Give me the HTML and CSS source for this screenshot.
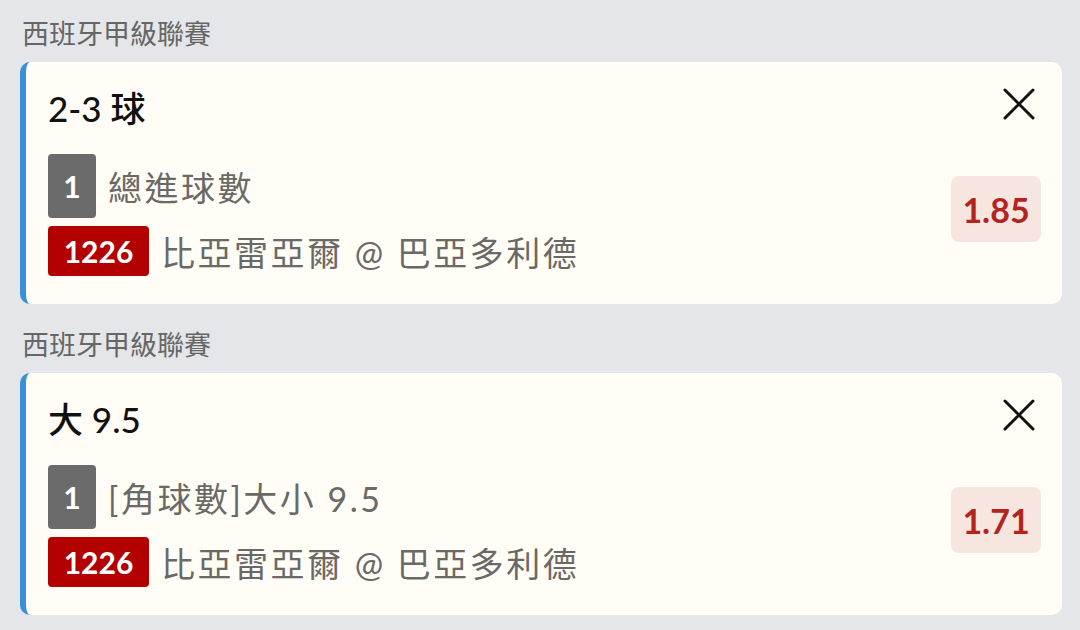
FILE: index.html
```html
<!DOCTYPE html>
<html lang="zh-Hant">
<head>
  <meta charset="UTF-8">
  <meta name="viewport" content="width=device-width, initial-scale=1.0">
  <title>投注單</title>
  <link rel="stylesheet" href="styles.css">
</head>
<body>
  <div class="bet-group">
    <div class="league">西班牙甲級聯賽</div>
    <div class="bet-card">
      <div class="bet-main">
        <div class="selection">2-3 球</div>
        <div class="bet-row">
          <span class="leg-no">1</span>
          <span class="bet-text">總進球數</span>
        </div>
        <div class="bet-row">
          <span class="match-no">1226</span>
          <span class="bet-text">比亞雷亞爾 @ 巴亞多利德</span>
        </div>
      </div>
      <div class="bet-side">
        <button class="close" aria-label="移除">
          <svg viewBox="0 0 32 32" width="32" height="32"><path d="M2 2 L30 30 M30 2 L2 30" stroke="#111" stroke-width="3" stroke-linecap="round" fill="none"/></svg>
        </button>
        <div class="odds">1.85</div>
      </div>
    </div>
  </div>

  <div class="bet-group">
    <div class="league">西班牙甲級聯賽</div>
    <div class="bet-card">
      <div class="bet-main">
        <div class="selection">大 9.5</div>
        <div class="bet-row">
          <span class="leg-no">1</span>
          <span class="bet-text">[角球數]大小 9.5</span>
        </div>
        <div class="bet-row">
          <span class="match-no">1226</span>
          <span class="bet-text">比亞雷亞爾 @ 巴亞多利德</span>
        </div>
      </div>
      <div class="bet-side">
        <button class="close" aria-label="移除">
          <svg viewBox="0 0 32 32" width="32" height="32"><path d="M2 2 L30 30 M30 2 L2 30" stroke="#111" stroke-width="3" stroke-linecap="round" fill="none"/></svg>
        </button>
        <div class="odds">1.71</div>
      </div>
    </div>
  </div>
</body>
</html>
```

FILE: styles.css
```css
body {
  margin: 0;
  padding: 0 18px 0 20px;
  background: #e4e6e9;
  font-family: Lato, "Noto Sans CJK TC", sans-serif;
}
.bet-group {
  margin-bottom: 7px;
}
.league {
  padding: 14px 0 8px 2px;
  line-height: 40px;
  font-size: 27px;
  color: #666;
}
.bet-card {
  display: flex;
  background: #fffdf5;
  border-left: 6px solid #3a90d6;
  border-radius: 10px;
  padding: 26px 21px 28px 22px;
}
.bet-main {
  flex: 1;
}
.selection {
  font-size: 35px;
  font-weight: 500;
  line-height: 40px;
  color: #111;
}
.bet-row {
  display: flex;
  align-items: center;
  gap: 12px;
}
.bet-row:nth-child(2) {
  margin-top: 26px;
}
.bet-row + .bet-row {
  margin-top: 8px;
}
.leg-no,
.match-no {
  display: flex;
  align-items: center;
  justify-content: center;
  color: #fff;
  font-weight: bold;
  font-size: 30px;
  border-radius: 4px;
}
.leg-no {
  width: 48px;
  height: 64px;
  background: #6b6b6b;
}
.match-no {
  width: 101px;
  height: 50px;
  background: #b30000;
}
.bet-text {
  font-size: 34px;
  color: #6b6966;
  letter-spacing: 2.5px;
}
.bet-side {
  display: flex;
  flex-direction: column;
  align-items: flex-end;
}
.close {
  border: none;
  background: none;
  padding: 0;
  margin-right: 6px;
  width: 32px;
  height: 32px;
  cursor: pointer;
}
.close svg {
  display: block;
}
.odds {
  margin-top: 56px;
  width: 90px;
  height: 66px;
  display: flex;
  align-items: center;
  justify-content: center;
  background: #f7e5df;
  border-radius: 8px;
  color: #b3241e;
  font-weight: bold;
  font-size: 34px;
}
```
